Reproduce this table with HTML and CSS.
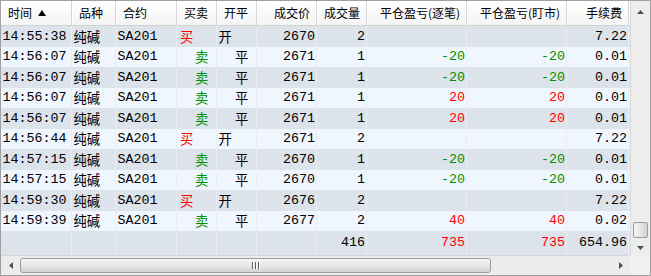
FILE: index.html
```html
<!DOCTYPE html>
<html>
<head>
<meta charset="utf-8">
<link rel="stylesheet" href="styles.css">
</head>
<body>
<div class="win">
  <div class="table">
    <div class="hdr">
      <div>时间 <svg class="sort" width="8" height="6" viewBox="0 0 8 6"><polygon points="4,0 8,6 0,6" fill="#000"/></svg></div>
      <div>品种</div>
      <div>合约</div>
      <div>买卖</div>
      <div>开平</div>
      <div class="r">成交价</div>
      <div class="r">成交量</div>
      <div class="r">平仓盈亏(逐笔)</div>
      <div class="r">平仓盈亏(盯市)</div>
      <div class="r">手续费</div>
    </div>
    <div class="row dk"><div>14:55:38</div><div>纯碱</div><div>SA201</div><div class="buy">买</div><div>开</div><div class="r">2670</div><div class="r">2</div><div class="r"></div><div class="r"></div><div class="r">7.22</div></div>
    <div class="row lt"><div>14:56:07</div><div>纯碱</div><div>SA201</div><div class="sell">卖</div><div class="cls">平</div><div class="r">2671</div><div class="r">1</div><div class="r g">-20</div><div class="r g">-20</div><div class="r">0.01</div></div>
    <div class="row dk"><div>14:56:07</div><div>纯碱</div><div>SA201</div><div class="sell">卖</div><div class="cls">平</div><div class="r">2671</div><div class="r">1</div><div class="r g">-20</div><div class="r g">-20</div><div class="r">0.01</div></div>
    <div class="row lt"><div>14:56:07</div><div>纯碱</div><div>SA201</div><div class="sell">卖</div><div class="cls">平</div><div class="r">2671</div><div class="r">1</div><div class="r red">20</div><div class="r red">20</div><div class="r">0.01</div></div>
    <div class="row dk"><div>14:56:07</div><div>纯碱</div><div>SA201</div><div class="sell">卖</div><div class="cls">平</div><div class="r">2671</div><div class="r">1</div><div class="r red">20</div><div class="r red">20</div><div class="r">0.01</div></div>
    <div class="row lt"><div>14:56:44</div><div>纯碱</div><div>SA201</div><div class="buy">买</div><div>开</div><div class="r">2671</div><div class="r">2</div><div class="r"></div><div class="r"></div><div class="r">7.22</div></div>
    <div class="row dk"><div>14:57:15</div><div>纯碱</div><div>SA201</div><div class="sell">卖</div><div class="cls">平</div><div class="r">2670</div><div class="r">1</div><div class="r g">-20</div><div class="r g">-20</div><div class="r">0.01</div></div>
    <div class="row lt"><div>14:57:15</div><div>纯碱</div><div>SA201</div><div class="sell">卖</div><div class="cls">平</div><div class="r">2670</div><div class="r">1</div><div class="r g">-20</div><div class="r g">-20</div><div class="r">0.01</div></div>
    <div class="row dk"><div>14:59:30</div><div>纯碱</div><div>SA201</div><div class="buy">买</div><div>开</div><div class="r">2676</div><div class="r">2</div><div class="r"></div><div class="r"></div><div class="r">7.22</div></div>
    <div class="row lt"><div>14:59:39</div><div>纯碱</div><div>SA201</div><div class="sell">卖</div><div class="cls">平</div><div class="r">2677</div><div class="r">2</div><div class="r red">40</div><div class="r red">40</div><div class="r">0.02</div></div>
    <div class="row tot"><div></div><div></div><div></div><div></div><div></div><div class="r"></div><div class="r">416</div><div class="r red">735</div><div class="r red">735</div><div class="r">654.96</div></div>
  </div>
  <div class="vscroll">
    <div class="vbtn up"><svg width="7" height="4" viewBox="0 0 7 4"><polygon points="3.5,0 7,4 0,4" fill="#505050"/></svg></div>
    <div class="vtrack"><div class="vthumb"></div></div>
    <div class="vbtn down"><svg width="7" height="4" viewBox="0 0 7 4"><polygon points="0,0 7,0 3.5,4" fill="#505050"/></svg></div>
  </div>
  <div class="hscroll">
    <div class="hbtn"><svg width="4" height="7" viewBox="0 0 4 7"><polygon points="4,0 4,7 0,3.5" fill="#505050"/></svg></div>
    <div class="htrack"><div class="hthumb"><span class="grip"></span><span class="grip"></span><span class="grip"></span></div></div>
    <div class="hbtn"><svg width="4" height="7" viewBox="0 0 4 7"><polygon points="0,0 4,3.5 0,7" fill="#505050"/></svg></div>
  </div>
  <div class="corner"></div>
</div>
</body>
</html>
```
FILE: styles.css
```css
html, body {
  margin: 0;
  padding: 0;
  background: #ffffff;
}

.win {
  --cols: 71px 44px 61px 40px 40px 60px 50px 100px 100px 62px;
  width: 651px;
  height: 276px;
  box-sizing: border-box;
  border: 1px solid #a0a0a0;
  display: grid;
  grid-template-columns: 629px 20px;
  grid-template-rows: 254px 20px;
  background: #f0f0f0;
}

.table {
  overflow: hidden;
  background: #dce3eb;
  display: flex;
  flex-direction: column;
}

.hdr {
  display: grid;
  grid-template-columns: var(--cols);
  height: 24px;
  border-bottom: 1px solid #d2d2d2;
  background: linear-gradient(#ffffff, #f4f4f4);
  flex: none;
}

.hdr > div {
  box-sizing: border-box;
  border-right: 1px solid #d5d5d5;
  box-shadow: inset 1px 0 #ffffff;
  padding: 0 6px 0 7px;
  font-family: "Noto Sans CJK SC", "Noto Sans", sans-serif;
  font-size: 12px;
  line-height: 24px;
  color: #000;
  white-space: nowrap;
  overflow: hidden;
  display: flex;
  align-items: center;
  gap: 6px;
}

.hdr > div.r {
  justify-content: flex-end;
}

.sort {
  display: block;
  margin-top: -1px;
}

.row {
  display: grid;
  grid-template-columns: var(--cols);
  flex: none;
}

.row.dk { height: 21px; background: #dce3eb; }
.row.lt { height: 20px; background: #f0f6fd; }
.row.tot { height: 24px; background: #dce3eb; }

.row > div {
  box-sizing: border-box;
  border-right: 1px solid #e8edf2;
  padding: 0 1px 1px 1.5px;
  font-family: "Liberation Mono", "Noto Sans CJK SC", monospace;
  font-size: 13.33px;
  color: #000;
  white-space: nowrap;
  overflow: hidden;
  display: flex;
  align-items: center;
}

.row > div.r {
  justify-content: flex-end;
}

.row > div.buy {
  color: #ff0000;
  padding-left: 3px;
}

.row > div.sell {
  color: #009000;
  padding-left: 18px;
}

.row > div.cls {
  padding-left: 18px;
}

.row > div.g { color: #009000; }
.row > div.red { color: #ff0000; }

.vscroll {
  display: flex;
  flex-direction: column;
  background: #ededed;
  border-left: 1px solid #dadada;
}

.vbtn {
  height: 17px;
  flex: none;
  display: flex;
  justify-content: center;
  align-items: center;
}

.vbtn.up { padding-top: 4px; box-sizing: border-box; }
.vbtn.down { padding-top: 3px; box-sizing: border-box; }

.vtrack {
  flex: 1;
  display: flex;
  flex-direction: column;
  justify-content: flex-end;
  align-items: center;
}

.vthumb {
  width: 15px;
  height: 16px;
  box-sizing: border-box;
  border: 1px solid #9c9c9c;
  border-radius: 2px;
  background: linear-gradient(90deg, #f6f6f6, #e4e4e4 55%, #d2d2d2);
}

.hscroll {
  display: flex;
  align-items: center;
  background: #ececec;
  border-top: 1px solid #d6d6d6;
}

.hbtn {
  width: 19px;
  height: 100%;
  flex: none;
  display: flex;
  justify-content: center;
  align-items: center;
}

.htrack {
  flex: 1;
  height: 100%;
  display: flex;
  align-items: center;
}

.hthumb {
  width: 471px;
  height: 15px;
  box-sizing: border-box;
  border: 1px solid #9c9c9c;
  border-radius: 3px;
  background: linear-gradient(#f7f7f7, #e6e6e6 50%, #d3d3d3);
  display: flex;
  justify-content: center;
  align-items: center;
  gap: 1px;
}

.grip {
  width: 1px;
  height: 7px;
  background: #606060;
  box-shadow: 1px 0 #ffffff;
  margin-right: 1px;
}

.corner {
  background: #f0f0f0;
}
```
